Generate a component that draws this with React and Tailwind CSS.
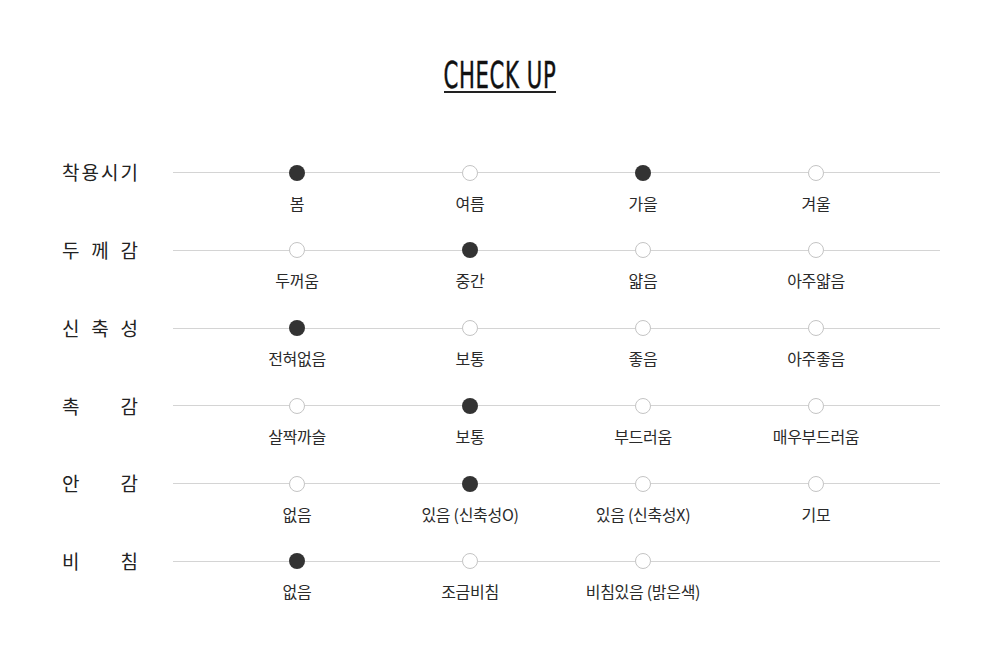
import React from "react";

const rows = [
  { label: ["착", "용", "시", "기"], opts: [["봄", 1], ["여름", 0], ["가을", 1], ["겨울", 0]] },
  { label: ["두", "께", "감"], opts: [["두꺼움", 0], ["중간", 1], ["얇음", 0], ["아주얇음", 0]] },
  { label: ["신", "축", "성"], opts: [["전혀없음", 1], ["보통", 0], ["좋음", 0], ["아주좋음", 0]] },
  { label: ["촉", "감"], opts: [["살짝까슬", 0], ["보통", 1], ["부드러움", 0], ["매우부드러움", 0]] },
  { label: ["안", "감"], opts: [["없음", 0], ["있음 (신축성O)", 1], ["있음 (신축성X)", 0], ["기모", 0]] },
  { label: ["비", "침"], opts: [["없음", 1], ["조금비침", 0], ["비침있음 (밝은색)", 0]] },
];

function Cell({ opt }) {
  if (!opt) {
    return (
      <div className="flex flex-col w-[173px]">
        <div className="flex items-center h-4">
          <div className="flex-1 h-px bg-[#d4d4d4]" />
        </div>
      </div>
    );
  }
  const [text, on] = opt;
  return (
    <div className="flex flex-col w-[173px] items-center">
      <div className="flex items-center h-4 w-full">
        <div className="flex-1 h-px bg-[#d4d4d4]" />
        {on ? (
          <div className="w-4 h-4 rounded-full bg-[#333333]" />
        ) : (
          <div className="w-4 h-4 rounded-full border border-[#c4c4c4] bg-white" />
        )}
        <div className="flex-1 h-px bg-[#d4d4d4]" />
      </div>
      <div className="mt-[12px] text-[16px] leading-5 text-[#2a2a2a] whitespace-nowrap tracking-[-0.3px]">{text}</div>
    </div>
  );
}

export default function App() {
  return (
    <div
      className="w-[1000px] h-[661px] bg-white"
      style={{ fontFamily: '"Noto Sans CJK KR", "Noto Sans", sans-serif' }}
    >
      <div className="flex justify-center pt-[56px]">
        <div className="flex flex-col items-center">
          <div
            className="text-[38px] leading-[38px] text-[#111111] scale-x-[0.62] tracking-[1px] [-webkit-text-stroke:0.45px_#111111]"
            style={{ fontFamily: '"Liberation Sans Narrow", "DejaVu Sans Condensed", "Liberation Sans", sans-serif' }}
          >
            CHECK UP
          </div>
          <div className="w-[112px] h-[1.5px] bg-[#222222] mt-[-3px]" />
        </div>
      </div>
      <div className="flex flex-col pt-[72px]">
        {rows.map((r, i) => (
          <div key={i} className="flex items-start h-[77.8px]">
            <div className="ml-[62px] w-[76px] h-4 flex items-center justify-between text-[19px] text-[#222222]">
              {r.label.map((c, j) => (
                <span key={j}>{c}</span>
              ))}
            </div>
            <div className="ml-[35px] flex w-[767px]">
              <div className="w-[37.5px] h-4 flex items-center">
                <div className="flex-1 h-px bg-[#d4d4d4]" />
              </div>
              {[0, 1, 2, 3].map((k) => (
                <Cell key={k} opt={r.opts[k]} />
              ))}
              <div className="w-[37.5px] h-4 flex items-center">
                <div className="flex-1 h-px bg-[#d4d4d4]" />
              </div>
            </div>
          </div>
        ))}
      </div>
    </div>
  );
}
